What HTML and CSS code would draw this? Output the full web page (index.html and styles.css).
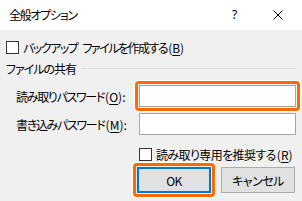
FILE: index.html
```html
<!DOCTYPE html>
<html lang="ja">
<head>
<meta charset="utf-8">
<link rel="stylesheet" href="styles.css">
</head>
<body>
<div class="dialog">
  <div class="titlebar">
    <span class="title">全般オプション</span>
    <span class="help">?</span>
    <span class="close"><svg width="10" height="10" viewBox="0 0 10 10"><path d="M0.5 0.5L9.5 9.5M9.5 0.5L0.5 9.5" stroke="#000" stroke-width="1"/></svg></span>
  </div>
  <div class="content">
    <div class="check backup"><span class="box"></span><span class="ctext">バックアップ ファイルを作成する<span class="key">(<u>B</u>)</span></span></div>
    <div class="group"><span class="gtitle">ファイルの共有</span><span class="rule"></span></div>
    <div class="fields">
      <span class="lbl">読み取りパスワード<span class="key">(<u>O</u>):</span></span>
      <span class="input focused"></span>
      <span class="lbl">書き込みパスワード<span class="key">(<u>M</u>):</span></span>
      <span class="input"></span>
    </div>
    <div class="check readonly"><span class="box"></span><span class="ctext">読み取り専用を推奨する<span class="key">(<u>R</u>)</span></span></div>
    <div class="buttons">
      <button class="btn default">OK</button>
      <button class="btn">キャンセル</button>
    </div>
  </div>
</div>
</body>
</html>
```

FILE: styles.css
```css
* { box-sizing: border-box; }
html, body { margin: 0; padding: 0; }
body {
  width: 302px;
  height: 201px;
  overflow: hidden;
  background: #f0f0f0;
  font-family: "Noto Sans CJK JP", sans-serif;
  font-size: 12px;
  letter-spacing: -1px;
  color: #000;
  font-feature-settings: "palt";
}
u { text-decoration-thickness: 1px; text-underline-offset: 2px; }
.key { letter-spacing: 0; margin-left: 1px; }
.titlebar {
  height: 30px;
  background: #fff;
  display: flex;
  align-items: center;
}
.title { padding-left: 9px; line-height: 14px; letter-spacing: -1.3px; }
.help { margin-left: auto; width: 6px; font-family: "Noto Sans", sans-serif; font-size: 12px; line-height: 12px; letter-spacing: 0; }
.close { margin-left: 35px; margin-right: 19px; width: 10px; height: 10px; display: flex; }
.content { padding-left: 6px; }
.check { display: flex; align-items: center; height: 13px; line-height: 13px; }
.box { width: 13px; height: 13px; border: 1px solid #333; background: #fff; flex: none; }
.ctext { margin-left: 4px; white-space: nowrap; }
.backup { margin-top: 11px; }
.backup .ctext { letter-spacing: -1.5px; word-spacing: 4px; }
.group { display: flex; align-items: center; height: 14px; margin-top: 7px; }
.gtitle { white-space: nowrap; }
.rule { flex: 1; height: 1px; background: #dcdcdc; margin-left: 5px; margin-right: 6px; }
.fields {
  display: grid;
  grid-template-columns: 123px 157px;
  grid-auto-rows: 22px;
  row-gap: 6px;
  margin-top: 10px;
  padding-left: 10px;
  align-items: center;
}
.lbl { white-space: nowrap; letter-spacing: -1.3px; }
.input { height: 22px; background: #fff; border: 1px solid #a6a6a6; position: relative; }
.focused::after {
  content: "";
  position: absolute;
  inset: -5px;
  border: 3px solid #ff6a00;
  border-radius: 4px;
  box-shadow: 0 0 0 1px #fff;
}
.readonly { margin-top: 13px; margin-left: 133px; }
.readonly .ctext { letter-spacing: -0.6px; }
.buttons { display: flex; gap: 10px; margin-top: 6px; margin-left: 131px; }
.btn {
  width: 74px;
  height: 26px;
  background: #e1e1e1;
  border: 1px solid #adadad;
  font: inherit;
  letter-spacing: -0.5px;
  font-feature-settings: "palt";
  padding: 0;
  color: #000;
  position: relative;
}
.default { border: 2px solid #0078d7; }
.default::after {
  content: "";
  position: absolute;
  inset: -6px;
  border: 3px solid #ff6a00;
  border-radius: 4px;
  box-shadow: 0 0 0 1px #fff;
}
```
